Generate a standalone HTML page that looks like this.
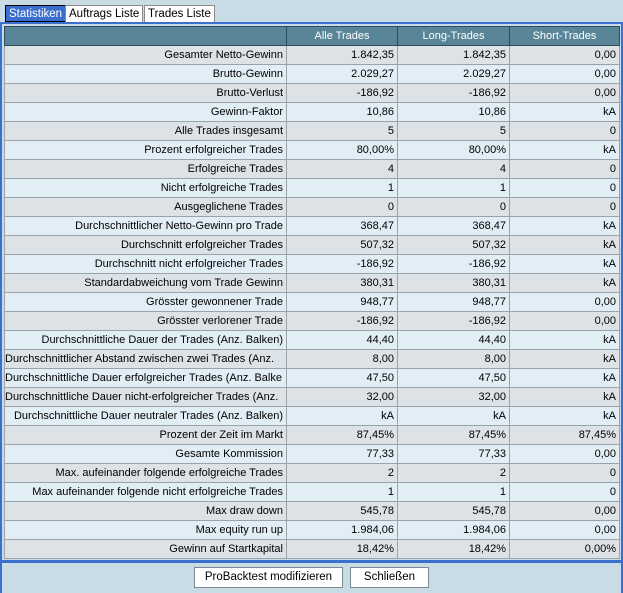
<!DOCTYPE html>
<html><head><style>
body{margin:0;width:623px;height:593px;background:#c9dbe4;font-family:"Liberation Sans",sans-serif;font-size:11px;position:relative;overflow:hidden}
.tab{position:absolute;top:5px;height:16px;line-height:16px;padding:0 3px;background:#fff;border:1px solid #8a8a8a;border-bottom:none;font-size:11.5px;color:#000}
.frame{position:absolute;left:0;top:22px;width:619px;height:536px;border:2px solid #3a6fd0;border-bottom:3px solid #3a6fd0;}
table{position:absolute;left:2px;top:2px;border-collapse:collapse;table-layout:fixed;width:615px;font-size:11px;font-family:"Liberation Sans",sans-serif}
td,th{height:18px;padding:0 3px;border:1px solid #9aa2aa;text-align:right;white-space:nowrap;overflow:hidden;line-height:18px}
th{background:#588598;color:#fff;font-weight:normal;text-align:center;border-color:#2c4d5c}
tr:nth-child(even) td{background:#dde2e7}
tr:nth-child(odd) td{background:#e2eef6}
.btn{position:absolute;top:567px;height:19px;line-height:19px;background:#fff;border:1px solid #7a8a95;text-align:center;font-size:11.5px}
</style></head><body>
<div style="position:absolute;left:0;top:22px;width:2px;height:571px;background:#3a6fd0"></div>
<div style="position:absolute;left:621px;top:22px;width:2px;height:571px;background:#3a6fd0"></div>
<div class="tab" style="left:5px;background:#3a6fd0;color:#fff;border:1px solid #000;height:15px">Statistiken</div>
<div class="tab" style="left:65px">Auftrags Liste</div>
<div class="tab" style="left:144px">Trades Liste</div>
<div class="frame">
<table>
<colgroup><col style="width:282px"><col style="width:111px"><col style="width:112px"><col style="width:110px"></colgroup>
<tr><th></th><th>Alle Trades</th><th>Long-Trades</th><th>Short-Trades</th></tr>
<tr><td>Gesamter Netto-Gewinn</td><td>1.842,35</td><td>1.842,35</td><td>0,00</td></tr>
<tr><td>Brutto-Gewinn</td><td>2.029,27</td><td>2.029,27</td><td>0,00</td></tr>
<tr><td>Brutto-Verlust</td><td>-186,92</td><td>-186,92</td><td>0,00</td></tr>
<tr><td>Gewinn-Faktor</td><td>10,86</td><td>10,86</td><td>kA</td></tr>
<tr><td>Alle Trades insgesamt</td><td>5</td><td>5</td><td>0</td></tr>
<tr><td>Prozent erfolgreicher Trades</td><td>80,00%</td><td>80,00%</td><td>kA</td></tr>
<tr><td>Erfolgreiche Trades</td><td>4</td><td>4</td><td>0</td></tr>
<tr><td>Nicht erfolgreiche Trades</td><td>1</td><td>1</td><td>0</td></tr>
<tr><td>Ausgeglichene Trades</td><td>0</td><td>0</td><td>0</td></tr>
<tr><td>Durchschnittlicher Netto-Gewinn pro Trade</td><td>368,47</td><td>368,47</td><td>kA</td></tr>
<tr><td>Durchschnitt erfolgreicher Trades</td><td>507,32</td><td>507,32</td><td>kA</td></tr>
<tr><td>Durchschnitt nicht erfolgreicher Trades</td><td>-186,92</td><td>-186,92</td><td>kA</td></tr>
<tr><td>Standardabweichung vom Trade Gewinn</td><td>380,31</td><td>380,31</td><td>kA</td></tr>
<tr><td>Grösster gewonnener Trade</td><td>948,77</td><td>948,77</td><td>0,00</td></tr>
<tr><td>Grösster verlorener Trade</td><td>-186,92</td><td>-186,92</td><td>0,00</td></tr>
<tr><td>Durchschnittliche Dauer der Trades (Anz. Balken)</td><td>44,40</td><td>44,40</td><td>kA</td></tr>
<tr><td style="text-align:left;padding-left:0">Durchschnittlicher Abstand zwischen zwei Trades (Anz.</td><td>8,00</td><td>8,00</td><td>kA</td></tr>
<tr><td style="text-align:left;padding-left:0">Durchschnittliche Dauer erfolgreicher Trades (Anz. Balke</td><td>47,50</td><td>47,50</td><td>kA</td></tr>
<tr><td style="text-align:left;padding-left:0">Durchschnittliche Dauer nicht-erfolgreicher Trades (Anz.</td><td>32,00</td><td>32,00</td><td>kA</td></tr>
<tr><td>Durchschnittliche Dauer neutraler Trades (Anz. Balken)</td><td>kA</td><td>kA</td><td>kA</td></tr>
<tr><td>Prozent der Zeit im Markt</td><td>87,45%</td><td>87,45%</td><td>87,45%</td></tr>
<tr><td>Gesamte Kommission</td><td>77,33</td><td>77,33</td><td>0,00</td></tr>
<tr><td>Max. aufeinander folgende erfolgreiche Trades</td><td>2</td><td>2</td><td>0</td></tr>
<tr><td>Max aufeinander folgende nicht erfolgreiche Trades</td><td>1</td><td>1</td><td>0</td></tr>
<tr><td>Max draw down</td><td>545,78</td><td>545,78</td><td>0,00</td></tr>
<tr><td>Max equity run up</td><td>1.984,06</td><td>1.984,06</td><td>0,00</td></tr>
<tr><td>Gewinn auf Startkapital</td><td>18,42%</td><td>18,42%</td><td>0,00%</td></tr>
</table>
</div>
<div class="btn" style="left:194px;width:147px">ProBacktest modifizieren</div>
<div class="btn" style="left:350px;width:77px">Schließen</div>
</body></html>
